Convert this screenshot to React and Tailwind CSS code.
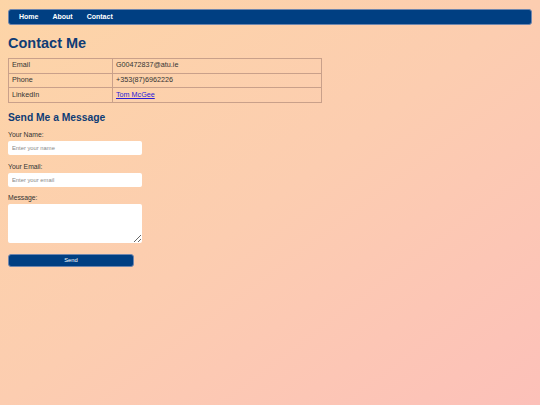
export default function App() {
  const rows = [
    ["Email", "G00472837@atu.ie"],
    ["Phone", "+353(87)6962226"],
    ["LinkedIn", null],
  ];
  return (
    <div className="min-h-screen w-full bg-linear-to-br from-[#fdd5a7] via-[#fccdb0] to-[#fcc0b9] px-2 pt-[9px] text-[#333] font-['Liberation_Sans',Arial,sans-serif]">
      <nav className="flex h-[16px] items-center gap-[14px] rounded-[3px] border border-[#6f86ad] bg-[#003f82] px-[10px]">
        {["Home", "About", "Contact"].map(l => (
          <a key={l} className="text-[7px] font-bold text-white">{l}</a>
        ))}
      </nav>

      <h1 className="mt-[9px] text-[14.5px] font-bold leading-[18px] text-[#0f3c75]">Contact Me</h1>

      <table className="mt-[6px] w-[314px] border-collapse text-[7.2px] text-[#333]">
        <tbody>
          {rows.map(([k, v]) => (
            <tr key={k} className="h-[14.7px]">
              <td className="w-[104px] border border-[#c9a08a] px-[3px] py-0">{k}</td>
              <td className="border border-[#c9a08a] px-[3px] py-0">
                {v ?? <a className="text-[#2a1bd8] underline">Tom McGee</a>}
              </td>
            </tr>
          ))}
        </tbody>
      </table>

      <h2 className="mt-[8px] text-[10.3px] font-bold leading-[14px] text-[#0f3c75]">Send Me a Message</h2>

      <form className="flex flex-col text-[6.8px] text-[#333]">
        <label className="mt-[5px] leading-[10px]">Your Name:</label>
        <input placeholder="Enter your name" className="mt-[1px] h-[14px] w-[134px] rounded-[2px] bg-white px-[4px] text-[5.8px] placeholder-[#888] outline-none" />
        <label className="mt-[7px] leading-[10px]">Your Email:</label>
        <input placeholder="Enter your email" className="mt-[1px] h-[14px] w-[134px] rounded-[2px] bg-white px-[4px] text-[5.8px] placeholder-[#888] outline-none" />
        <label className="mt-[6px] leading-[10px]">Message:</label>
        <textarea className="mt-[1px] h-[39px] w-[134px] rounded-[2px] bg-white outline-none" />
        <button type="button" className="mt-[11px] h-[13px] w-[126px] rounded-[3px] border border-[#6f86ad] bg-[#003f82] text-[5.8px] text-white">Send</button>
      </form>
    </div>
  );
}
